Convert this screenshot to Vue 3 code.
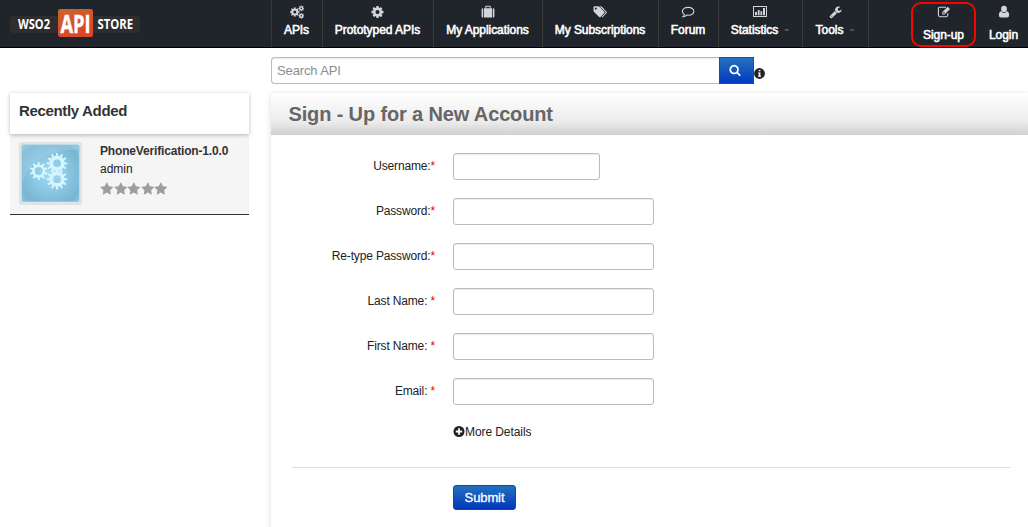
<script setup>
const cog =
  'M1152 896q0-106-75-181t-181-75-181 75-75 181 75 181 181 75 181-75 75-181zm512-109v222q0 12-8 23t-20 13l-185 28q-19 54-39 91 35 50 107 138 10 12 10 25t-9 23q-27 37-99 108t-94 71q-12 0-26-9l-138-108q-44 23-91 38-16 136-29 186-7 28-36 28h-222q-14 0-24.500-8.500t-11.500-21.500l-28-184q-49-16-90-37l-141 107q-10 9-25 9-14 0-25-11-126-114-165-168-7-10-7-23 0-12 8-23 15-21 51-66.500t54-70.500q-27-50-41-99l-183-27q-13-2-21-12.500t-8-23.500v-222q0-12 8-23t19-13l186-28q14-46 39-92-40-57-107-138-10-12-10-24 0-10 9-23 26-36 98.500-107.500t94.500-71.500q13 0 26 10l138 107q44-23 91-38 16-136 29-186 7-28 36-28h222q14 0 24.500 8.500t11.500 21.500l28 184q49 16 90 37l142-107q9-9 24-9 13 0 25 10 129 119 165 170 7 8 7 22 0 12-8 23-15 21-51 66.500t-54 70.500q26 50 41 98l183 28q13 2 21 12.500t8 23.500z'
const wrench =
  'M448 1472q0-26-19-45t-45-19-45 19-19 45 19 45 45 19 45-19 19-45zm644-420l-682 682q-37 37-90 37-52 0-91-37l-106-108q-38-36-38-90 0-53 38-91l681-681q39 98 114.500 173.500t173.500 114.500zm634-435q0 39-23 106-47 134-164.500 217.500t-258.500 83.500q-185 0-316.500-131.500t-131.500-316.500 131.500-316.500 316.500-131.500q58 0 121.500 16.500t107.500 46.500q16 11 16 28t-16 28l-293 169v224l193 107q5-3 79-48.500t135.500-81 70.500-35.500q15 0 23.500 10t8.500 25z'
const star =
  'M1728 647q0 22-26 48l-363 354 86 500q1 7 1 20 0 21-10.500 35.500t-30.500 14.500q-19 0-40-12l-449-236-449 236q-22 12-40 12-21 0-31.500-14.500t-10.500-35.500q0-6 2-20l86-500-364-354q-25-27-25-48 0-37 56-46l502-73 225-455q19-41 49-41t49 41l225 455 502 73q56 9 56 46z'
const search =
  'M1216 832q0-185-131.500-316.500t-316.500-131.500-316.500 131.500-131.500 316.500 131.500 316.500 316.500 131.500 316.500-131.500 131.500-316.500zm512 832q0 52-38 90t-90 38q-54 0-90-38l-343-342q-179 124-399 124-143 0-273.500-55.500t-225-150-150-225-55.500-273.500 55.500-273.500 150-225 225-150 273.500-55.500 273.500 55.500 225 150 150 225 55.500 273.500q0 220-124 399l343 343q37 37 37 90z'

// Outline of a toothed wheel with a round hole, centred on (cx, cy)
function gear(cx, cy, outer, root, hole, teeth) {
  const pts = []
  const step = (Math.PI * 2) / teeth
  for (let i = 0; i < teeth; i++) {
    const a = i * step - Math.PI / 2
    for (const [r, d] of [[root, -0.27], [outer, -0.17], [outer, 0.17], [root, 0.27]]) {
      pts.push(`${(cx + r * Math.cos(a + d * step)).toFixed(2)} ${(cy + r * Math.sin(a + d * step)).toFixed(2)}`)
    }
  }
  return `M${pts.join('L')}ZM${cx - hole} ${cy}a${hole} ${hole} 0 1 0 ${hole * 2} 0a${hole} ${hole} 0 1 0 ${-hole * 2} 0Z`
}
const cogs = gear(4.8, 7, 4.8, 3.7, 1.5, 8) + gear(11.3, 3.4, 2.9, 2.2, 0.8, 8) + gear(11.3, 10.8, 2.9, 2.2, 0.8, 8)
const thumbGears = [
  gear(19.7, 29, 9, 6.6, 3.9, 10),
  gear(38, 21.3, 10.4, 7.7, 3.9, 12),
  gear(38, 37.2, 10.4, 7.7, 3.9, 12),
]

const nav = [
  { label: 'APIs', icon: 'cogs', cls: 'w-apis' },
  { label: 'Prototyped APIs', icon: 'cog', cls: 'w-proto' },
  { label: 'My Applications', icon: 'case', cls: 'w-apps' },
  { label: 'My Subscriptions', icon: 'tags', cls: 'w-subs' },
  { label: 'Forum', icon: 'comment', cls: 'w-forum' },
  { label: 'Statistics', icon: 'chart', cls: 'w-stats', caret: true },
  { label: 'Tools', icon: 'wrench', cls: 'w-tools', caret: true },
]
const fields = [
  { label: 'Username:', short: true },
  { label: 'Password:' },
  { label: 'Re-type Password:' },
  { label: 'Last Name: ' },
  { label: 'First Name: ' },
  { label: 'Email: ' },
]
</script>

<template>
  <div class="page">
    <header class="top">
      <svg class="logo" width="271" height="47" viewBox="0 0 271 47">
        <defs>
          <linearGradient id="orange" x1="0" y1="0" x2="0.5" y2="1">
            <stop offset="0" stop-color="#c8662d" />
            <stop offset="1" stop-color="#dd4427" />
          </linearGradient>
        </defs>
        <rect x="10" y="16" width="130" height="17" rx="4" fill="#2e2e2e" />
        <rect x="58" y="9" width="35" height="28" rx="2.500" fill="url(#orange)" />
        <text x="18" y="29.300" font-size="13.300" textLength="32" lengthAdjust="spacingAndGlyphs">WSO2</text>
        <text class="big" x="60.500" y="32.600" font-size="24.300" textLength="30" lengthAdjust="spacingAndGlyphs">API</text>
        <text x="97.500" y="29.300" font-size="13.300" textLength="35.500" lengthAdjust="spacingAndGlyphs">STORE</text>
      </svg>

      <nav class="menu">
        <a v-for="n in nav" :key="n.label" class="item" :class="n.cls">
          <svg v-if="n.icon === 'cogs'" class="ico" width="14" height="14" viewBox="0 0 14 14"><path fill-rule="evenodd" :d="cogs" /></svg>
          <svg v-else-if="n.icon === 'cog'" class="ico" width="13" height="14" viewBox="64 0 1664 1792"><path :d="cog" /></svg>
          <svg v-else-if="n.icon === 'case'" class="ico" width="14" height="14" viewBox="0 0 14 14">
            <path d="M4.300 3.200V1.600q0-.8.8-.8h3.800q.8 0 .8.8v1.600h-1V1.800H5.300v1.400z" />
            <path d="M2.200 3.200v9.400H1.900Q.6 12.600.6 11.300V4.500Q.6 3.200 1.900 3.200zM3 3.200h8v9.400H3zM11.800 3.200h.3q1.300 0 1.300 1.300v6.800q0 1.300-1.300 1.300h-.3z" />
          </svg>
          <svg v-else-if="n.icon === 'tags'" class="ico" width="14" height="14" viewBox="0 0 14 14">
            <path fill-rule="evenodd" d="M.5 2.200Q.5 1.200 1.500 1.200H5q.8 0 1.400.6l4.900 4.900q.7.700 0 1.400l-3.800 3.800q-.7.700-1.400 0L1.100 6.900Q.5 6.300.5 5.600zM2.800 2.400a1 1 0 1 0 .01 0z" />
            <path d="M6.500 1.200h1q.8 0 1.400.6l4.700 4.900q.7.700 0 1.400L9.800 11.900q-.7.600-1.400.1l4-4.100q.5-.5 0-1.100z" />
          </svg>
          <svg v-else-if="n.icon === 'comment'" class="ico" width="14" height="14" viewBox="0 0 14 14">
            <path class="line" d="M7.200 2.400c3.300 0 5.600 1.700 5.600 3.900s-2.300 3.900-5.600 3.900q-.8 0-1.500-.1-1.300 1.300-3.600 1.500 1.200-.9 1.200-2.100C2 8.700 1.400 7.600 1.400 6.300c0-2.200 2.500-3.900 5.800-3.900z" />
          </svg>
          <svg v-else-if="n.icon === 'chart'" class="ico" width="14" height="14" viewBox="0 0 14 14">
            <path fill-rule="evenodd" d="M0 1h14v11H0zM1 2v9h12v-9z" />
            <path d="M2 7h2v3.300H2zM4.800 5h1.800v5.300H4.800zM7.400 6.300h1.800v4H7.400zM10 3h2v7.300h-2z" />
          </svg>
          <svg v-else class="ico" width="13" height="13" viewBox="0 0 1792 1792"><path :d="wrench" /></svg>
          <span class="cap">{{ n.label }}<i v-if="n.caret" class="caret"></i></span>
        </a>
      </nav>

      <div class="account">
        <a class="item signup">
          <svg class="ico" width="14" height="14" viewBox="0 0 14 14">
            <path class="line" d="M9 2.300H3Q1.400 2.300 1.400 3.900v6.200q0 1.600 1.600 1.600h6.200q1.600 0 1.600-1.600V8.300" />
            <path fill-rule="evenodd" d="M5.300 9.400V7.100L10.700 1.700 13 4 7.600 9.400zM6.300 7.400v1h1l.6-.6-1-1z" />
          </svg>
          <span class="cap">Sign-up</span>
          <span class="marker"></span>
        </a>
        <a class="item login">
          <svg class="ico" width="14" height="14" viewBox="0 0 14 14">
            <ellipse cx="7" cy="4" rx="2.900" ry="3.200" />
            <path d="M4.200 6.200Q5.200 7.900 7 7.900t2.800-1.700q2.300.3 2.300 4 0 2.300-1.900 2.300H3.800Q1.900 12.500 1.900 10.200q0-3.700 2.300-4z" />
          </svg>
          <span class="cap">Login</span>
        </a>
      </div>
    </header>

    <div class="body">
      <aside class="side">
        <h2 class="side-head">Recently Added</h2>
        <div class="card">
          <svg class="thumb" width="63" height="63" viewBox="0 0 63 63">
            <defs>
              <radialGradient id="sky" cx=".5" cy=".52" r=".72">
                <stop offset="0" stop-color="#a2dbf5" />
                <stop offset=".4" stop-color="#8cc9e5" />
                <stop offset=".8" stop-color="#79b4d1" />
                <stop offset="1" stop-color="#8acbe8" />
              </radialGradient>
            </defs>
            <rect width="63" height="63" rx="2" fill="#e1e2e2" />
            <rect x="3" y="3" width="57" height="56.500" rx="1.500" fill="url(#sky)" stroke="#83cdec" stroke-width=".8" />
            <path d="M3.500 3.500h56v4Q32 8 17 20 8 28 3.500 40z" fill="#b4dcec" opacity=".3" />
            <path v-for="g in thumbGears" :key="g" :d="g" fill="#d5f5fe" fill-rule="evenodd" />
          </svg>
          <div class="info">
            <strong class="name">PhoneVerification-1.0.0</strong>
            <span class="owner">admin</span>
            <div class="stars">
              <svg v-for="s in 5" :key="s" width="13.600" height="14" viewBox="0 0 1792 1792"><path :d="star" /></svg>
            </div>
          </div>
        </div>
      </aside>

      <main class="main">
        <div class="search">
          <input class="query" type="text" placeholder="Search API" />
          <button class="go" type="button">
            <svg width="12" height="12" viewBox="0 0 1792 1792"><path :d="search" /></svg>
          </button>
          <svg class="hint" width="11" height="11" viewBox="0 0 11 11">
            <circle cx="5.500" cy="5.500" r="5.400" fill="#222" />
            <path d="M4.700 2h1.700v1.300H4.700zM4 4.400h2.400v3.300H7.100v1H4v-1h.7V5.400H4z" fill="#fff" />
          </svg>
        </div>

        <section class="panel">
          <h1 class="title">Sign - Up for a New Account</h1>
          <form class="form" @submit.prevent>
            <div v-for="f in fields" :key="f.label" class="row">
              <label class="label">{{ f.label }}<b class="req">*</b></label>
              <input class="field" :class="{ short: f.short }" type="text" />
            </div>
            <a class="more">
              <svg width="12" height="12" viewBox="0 0 12 12">
                <circle cx="6" cy="5.500" r="5.500" fill="#222" />
                <path d="M5.100 2.300h1.800v2.300h2.300v1.800H6.900v2.300H5.100V6.400H2.800V4.600h2.300z" fill="#fff" />
              </svg><span>More Details</span>
            </a>
            <hr class="rule" />
            <button class="submit" type="button">Submit</button>
          </form>
        </section>
      </main>
    </div>
  </div>
</template>

<style>
body {
  background: #fff;
}
</style>

<style scoped>
.page,
.page * {
  box-sizing: border-box;
}
.page {
  width: 1028px;
  height: 527px;
  overflow: hidden;
  font: 12px/18px "Liberation Sans", Arial, sans-serif;
  color: #222;
}
.top {
  display: flex;
  height: 48px;
  background: #20252b;
  border-bottom: 1px solid #000;
}
.logo {
  flex: none;
}
.logo text {
  font-family: "Open Sans", sans-serif;
  font-weight: 700;
  fill: #fff;
}
.logo .big {
  stroke: #fff;
  stroke-width: 0.5px;
}
.menu {
  display: flex;
  border-left: 1px solid #33363a;
}
.item {
  display: flex;
  flex-direction: column;
  align-items: center;
  padding: 5px 1px 0 0;
  color: #fff;
}
.menu .item {
  border-right: 1px solid #3a3a3a;
}
.w-apis { width: 51px; }
.w-proto { width: 111px; }
.w-apps { width: 109px; }
.w-subs { width: 116px; }
.w-forum { width: 60px; }
.w-stats { width: 84px; }
.w-tools { width: 66px; }
.ico {
  display: block;
  height: 14px;
  fill: #d4d5d6;
}
.line {
  fill: none;
  stroke: #d4d5d6;
  stroke-width: 1.1;
}
.cap {
  margin-top: 2px;
  white-space: nowrap;
  letter-spacing: -0.05px;
  -webkit-text-stroke: 0.55px #fff;
}
.caret {
  display: inline-block;
  width: 5px;
  height: 2px;
  margin-left: 6px;
  vertical-align: 3px;
  background: #55585c;
  clip-path: polygon(0 0, 100% 0, 70% 100%, 30% 100%);
}
.account {
  display: flex;
  margin-left: 42px;
}
.signup {
  position: relative;
  width: 66px;
}
.login {
  width: 54px;
}
.account .cap {
  margin-top: 7px;
}
.marker {
  position: absolute;
  left: 0;
  top: 2px;
  width: 65px;
  height: 45px;
  border: 2px solid #ff0000;
  border-radius: 10px;
}
.body {
  display: flex;
}
.side {
  width: 239px;
  margin: 45px 22px 0 10px;
  flex: none;
}
.side-head {
  position: relative;
  margin: 0;
  height: 41px;
  padding: 9px 9px 0;
  font-size: 15px;
  line-height: 18px;
  letter-spacing: -0.34px;
  color: #333;
  background: #fff;
  box-shadow: 0 1px 4px rgba(0, 0, 0, 0.28);
}
.card {
  display: flex;
  height: 81px;
  padding: 8px 9px 0;
  background: #f5f5f5;
  border-bottom: 1px solid #333;
}
.thumb {
  flex: none;
}
.info {
  margin-left: 18px;
}
.name,
.owner {
  display: block;
}
.name {
  font-size: 12px;
  letter-spacing: -0.17px;
  color: #333;
}
.stars {
  display: flex;
  margin: 4px 0 0 0;
}
.stars svg {
  fill: #9e9e9e;
}
.main {
  flex: 1;
  padding-top: 9px;
}
.search {
  display: flex;
  height: 36px;
}
.query {
  width: 448px;
  height: 27px;
  padding: 0 5px;
  font: 13px/18px "Liberation Sans", Arial, sans-serif;
  letter-spacing: -0.12px;
  border: 1px solid #bbb;
  border-right: 0;
  border-radius: 4px 0 0 4px;
  outline: 0;
  box-shadow: inset 0 1px 1px rgba(0, 0, 0, 0.08);
}
.query::placeholder {
  color: #8d8d8d;
  opacity: 1;
}
.go {
  display: flex;
  align-items: center;
  justify-content: center;
  width: 35px;
  height: 27px;
  padding: 0 3px 1px 0;
  border: 1px solid #0f4fae;
  background: linear-gradient(#2673c0, #0339bd);
}
.go svg {
  fill: #fff;
}
.hint {
  margin-top: 11px;
}
.panel {
  height: 440px;
  border-radius: 4px 0 0 0;
  box-shadow: 0 1px 6px rgba(0, 0, 0, 0.15);
}
.title {
  margin: 0;
  height: 42px;
  padding-left: 17.5px;
  font-size: 20px;
  line-height: 42px;
  letter-spacing: -0.14px;
  color: #666;
  border-radius: 4px 0 0 0;
  background: linear-gradient(#fff 0%, #ebebeb 70%, #cfcfcf 100%);
}
.form {
  padding-top: 18px;
}
.row {
  display: flex;
  height: 27px;
  margin-bottom: 18px;
}
.label {
  width: 164px;
  margin-right: 18px;
  line-height: 27px;
  letter-spacing: -0.16px;
  text-align: right;
  white-space: pre;
}
.req {
  font-weight: 400;
  color: #e80000;
}
.field {
  width: 201px;
  height: 27px;
  border: 1px solid #bbb;
  border-radius: 3px;
  outline: 0;
  box-shadow: inset 0 1px 1px rgba(0, 0, 0, 0.08);
}
.short {
  width: 147px;
}
.more {
  display: flex;
  align-items: center;
  height: 18px;
  margin-left: 182px;
  letter-spacing: -0.08px;
}
.rule {
  height: 1px;
  margin: 26px 18px 17px 21px;
  border: 0;
  background: #ddd;
}
.submit {
  display: block;
  width: 63px;
  height: 25px;
  margin-left: 182px;
  padding: 0;
  font: 13px/18px "Liberation Sans", Arial, sans-serif;
  letter-spacing: -0.1px;
  color: #fff;
  -webkit-text-stroke: 0.3px #fff;
  border: 1px solid #0f47aa;
  border-radius: 3px;
  background: linear-gradient(#2470bf, #0238bc);
}
</style>
